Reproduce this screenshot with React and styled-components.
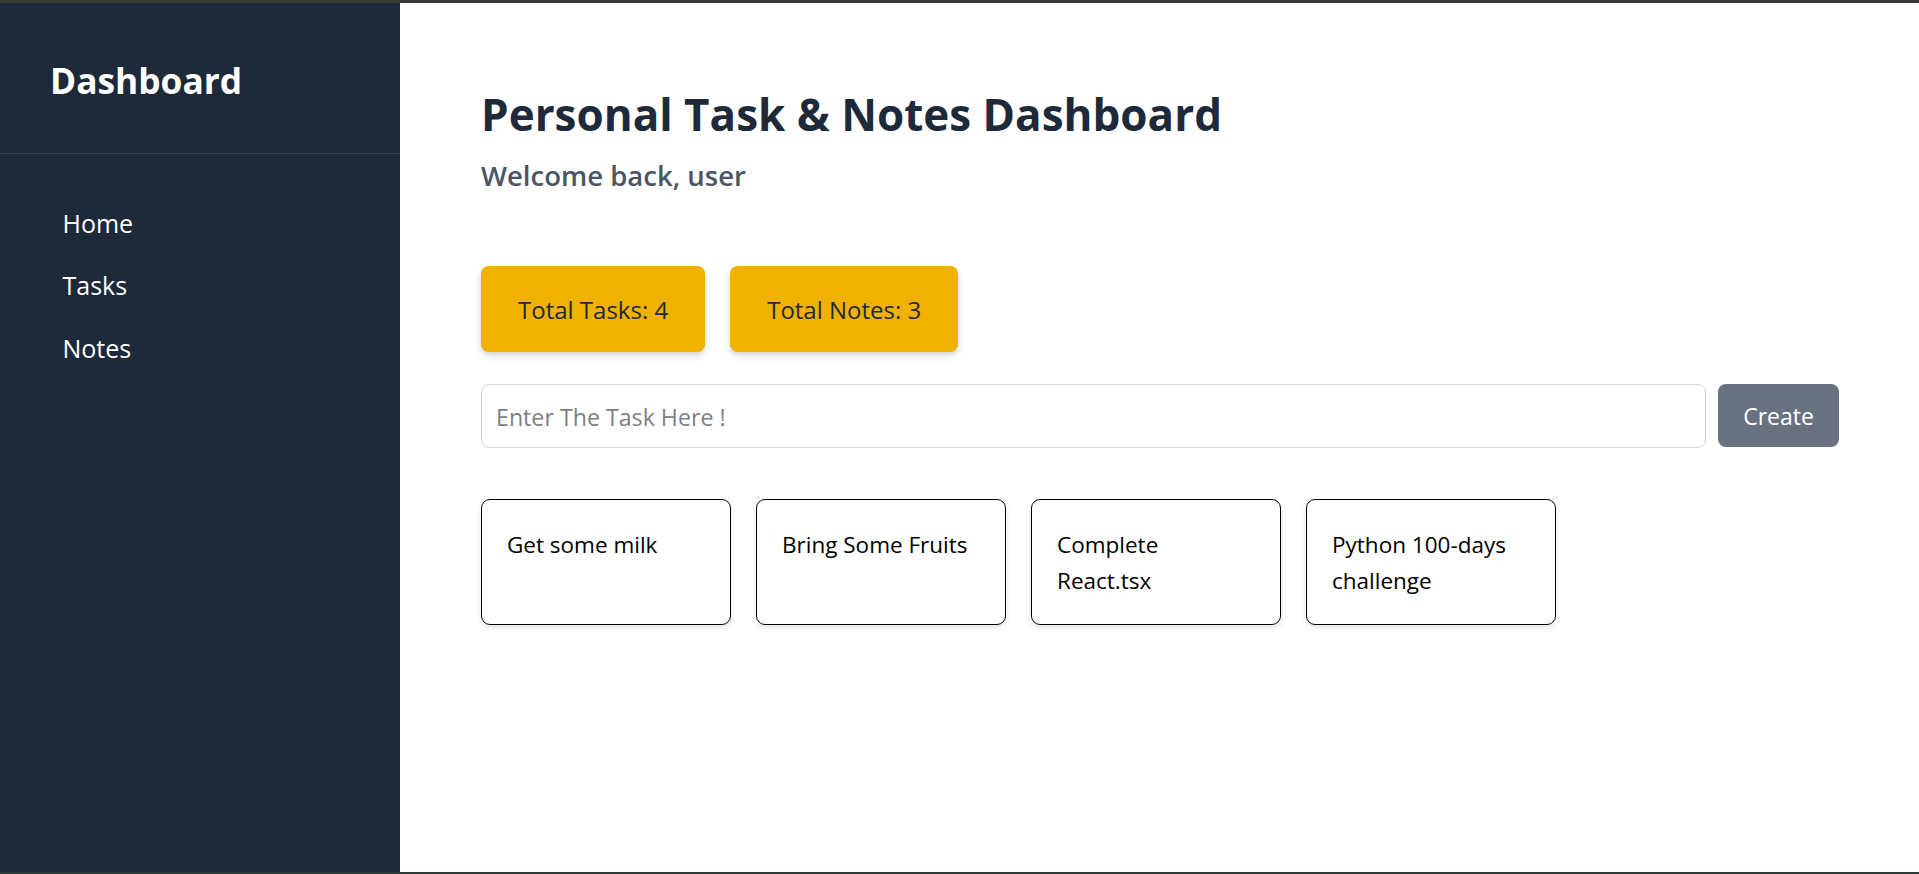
import { useState } from "react";
import styled, { createGlobalStyle } from "styled-components";

const GlobalStyle = createGlobalStyle`
  * {
    box-sizing: border-box;
  }
  body {
    margin: 0;
    font-family: "Segoe UI", "Open Sans", sans-serif;
    background: #ffffff;
  }
`;

const Page = styled.div`
  display: flex;
  height: 874px;
  border-top: 3px solid #3b3b3b;
  border-bottom: 2px solid #2f3935;
`;

const Sidebar = styled.aside`
  width: 400px;
  flex-shrink: 0;
  background: #1e2939;
  color: #ffffff;
`;

const SidebarHeader = styled.div`
  height: 151px;
  display: flex;
  align-items: center;
  padding: 3px 50px 0;
  border-bottom: 1px solid #364153;
`;

const Brand = styled.h2`
  margin: 0;
  font-size: 35.3px;
  font-weight: 700;
`;

const Nav = styled.ul`
  list-style: none;
  margin: 0;
  padding: 38px 50px 0;
`;

const NavItem = styled.li`
  padding: 12.5px 12.5px;
  font-size: 25px;
  line-height: 37.5px;
  cursor: pointer;
`;

const Main = styled.main`
  flex: 1;
  padding: 80px 80px 80px 81px;
`;

const Title = styled.h1`
  margin: 6px 0 0;
  font-size: 44px;
  line-height: 50px;
  font-weight: 700;
  color: #1e2939;
`;

const Subtitle = styled.h3`
  margin: 17px 0 0;
  font-size: 27.5px;
  line-height: 40px;
  font-weight: 600;
  color: #4a5565;
`;

const Stats = styled.div`
  display: flex;
  gap: 25px;
  margin-top: 70px;
`;

const StatCard = styled.div`
  height: 86px;
  padding: 0 37px;
  display: flex;
  align-items: center;
  background: #f0b100;
  color: #1e2939;
  border-radius: 8px;
  font-size: 24px;
  box-shadow: 0 4px 8px rgba(0, 0, 0, 0.12), 0 2px 4px rgba(0, 0, 0, 0.08);
`;

const Form = styled.form`
  display: flex;
  gap: 12px;
  margin-top: 32px;
`;

const TaskInput = styled.input`
  flex: 1;
  height: 64px;
  padding: 2px 14px 0;
  border: 1px solid #d1d5dc;
  border-radius: 8px;
  font-family: inherit;
  font-size: 23.2px;
  color: #1e2939;
  outline: none;

  &::placeholder {
    color: #808080;
  }
`;

const CreateButton = styled.button`
  width: 121px;
  height: 63px;
  padding-top: 2px;
  border: none;
  border-radius: 8px;
  background: #6a7282;
  color: #ffffff;
  font-family: inherit;
  font-size: 23px;
  cursor: pointer;
`;

const TaskList = styled.div`
  display: flex;
  gap: 25px;
  margin-top: 51px;
`;

const TaskCard = styled.div`
  width: 250px;
  padding: 27px 25px 25px;
  border: 1px solid #000000;
  border-radius: 9px;
  font-size: 22.5px;
  line-height: 36px;
  color: #000000;
  box-shadow: 0 3px 6px rgba(0, 0, 0, 0.1);
`;

const initialTasks = [
  "Get some milk",
  "Bring Some Fruits",
  "Complete React.tsx",
  "Python 100-days challenge",
];

const App = () => {
  const [tasks, setTasks] = useState(initialTasks);
  const [text, setText] = useState("");
  const notes = 3;

  const handleSubmit = (e) => {
    e.preventDefault();
    if (!text.trim()) return;
    setTasks([...tasks, text.trim()]);
    setText("");
  };

  return (
    <>
      <GlobalStyle />
      <Page>
        <Sidebar>
          <SidebarHeader>
            <Brand>Dashboard</Brand>
          </SidebarHeader>
          <Nav>
            <NavItem>Home</NavItem>
            <NavItem>Tasks</NavItem>
            <NavItem>Notes</NavItem>
          </Nav>
        </Sidebar>
        <Main>
          <Title>Personal Task &amp; Notes Dashboard</Title>
          <Subtitle>Welcome back, user</Subtitle>
          <Stats>
            <StatCard>Total Tasks: {tasks.length}</StatCard>
            <StatCard>Total Notes: {notes}</StatCard>
          </Stats>
          <Form onSubmit={handleSubmit}>
            <TaskInput
              placeholder="Enter The Task Here !"
              value={text}
              onChange={(e) => setText(e.target.value)}
            />
            <CreateButton type="submit">Create</CreateButton>
          </Form>
          <TaskList>
            {tasks.map((task, i) => (
              <TaskCard key={i}>{task}</TaskCard>
            ))}
          </TaskList>
        </Main>
      </Page>
    </>
  );
};

export default App;
